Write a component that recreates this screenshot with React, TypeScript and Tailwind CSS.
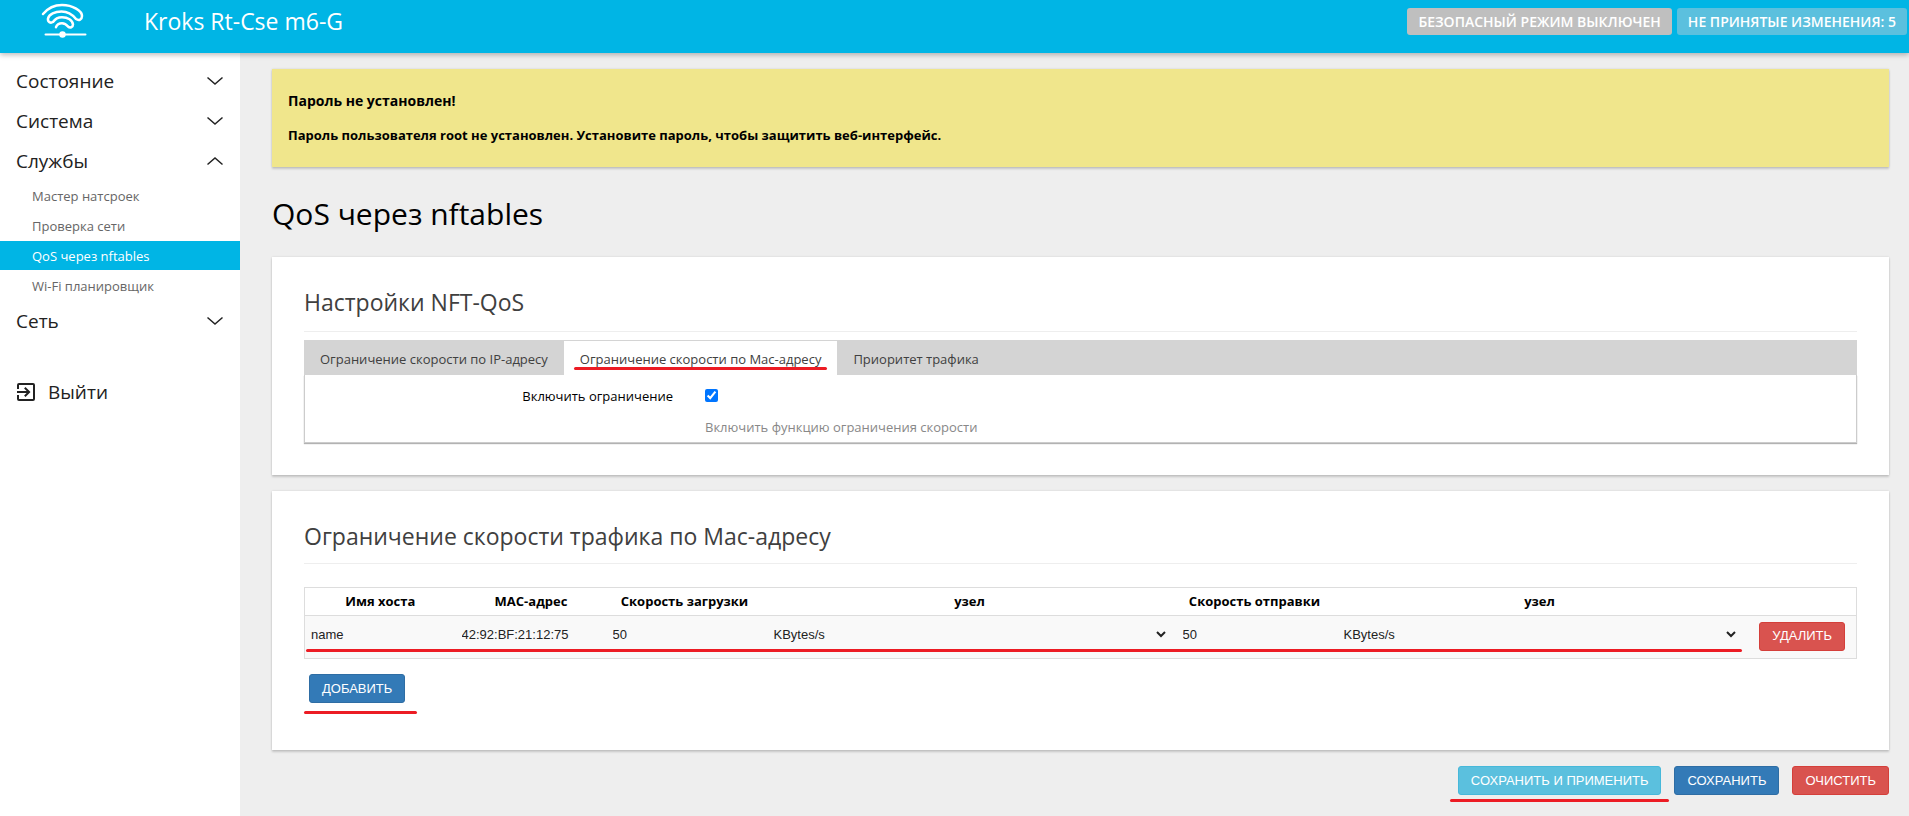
import React, { useState } from 'react';

interface Section {
  title: string;
  items?: string[];
}

const sections: Section[] = [
  { title: 'Состояние' },
  { title: 'Система' },
  { title: 'Службы', items: ['Мастер натсроек', 'Проверка сети', 'QoS через nftables', 'Wi-Fi планировщик'] },
  { title: 'Сеть' }
];

const tabs = ['Ограничение скорости по IP-адресу', 'Ограничение скорости по Mac-адресу', 'Приоритет трафика'];

const units = ['KBytes/s', 'MBytes/s', 'Bytes/s'];

const cardClass = 'bg-white px-8 shadow-[0_2px_2px_0_rgba(0,0,0,0.16),0_0_2px_0_rgba(0,0,0,0.12)]';
const buttonClass = "h-[29px] rounded-[3px] border px-3 font-['Liberation_Sans',sans-serif] text-[13px] leading-[26px] text-white cursor-pointer";
const fieldClass = "w-full bg-transparent font-['Liberation_Sans',sans-serif] text-[13px] leading-5 text-[#222]";

const Logo: React.FC = () => (
  <svg className="h-9 w-12" viewBox="0 0 48 36" fill="none" stroke="#fff" strokeWidth="2.500" strokeLinecap="round" strokeLinejoin="round" aria-hidden="true">
    <path d="M3 12C8 6 15 3 22 3c11 0 20 6 20 11 0 3.500-3 5-6 3-4-5-9-7.500-14.500-7.500C15 9.500 9 12 8 16.500 7.500 20 10.500 21.500 13 20c2-3 5.500-4.800 9-4.800 6 0 10.500 3 11 7.300 0 2.800-3 3.800-5 2-1.500-2-3.800-3.300-6-3.300-3 0-5.200 1.500-6 4" />
    <path d="M5.500 32.500h40" strokeWidth="2" />
    <circle cx="22.500" cy="32.500" r="2" fill="#fff" />
  </svg>
);

const Chevron: React.FC<{ open: boolean }> = ({ open }) => (
  <svg className="h-4 w-4" viewBox="0 0 16 16" fill="none" stroke="#222" strokeWidth="1.500" aria-hidden="true">
    {open ? <path d="M.5 11.500 8 5l7.500 6.500" /> : <path d="M.5 4.500 8 11l7.500-6.500" />}
  </svg>
);

// Red marker line under the things the reader has to touch
const Marker: React.FC<{ className: string }> = ({ className }) => (
  <span className={`pointer-events-none absolute h-[3px] rounded-full bg-[#ec1c24] ${className}`} />
);

const Sidebar: React.FC = () => (
  <nav className="w-60 shrink-0 bg-white pt-2">
    <ul>
      {sections.map((section) => (
        <li key={section.title}>
          <button className="flex h-10 w-full cursor-pointer items-center justify-between pl-4 pr-[17px] text-[19px] text-[#222]">
            {section.title}
            <Chevron open={!!section.items} />
          </button>
          {section.items && (
            <ul>
              {section.items.map((item) => (
                <li key={item} className="h-[30px]">
                  <a
                    href="#"
                    className={`block h-[29px] px-8 text-[13px] leading-[30px] ${item === 'QoS через nftables' ? 'bg-[#00b5e5] text-white' : 'text-[#666]'}`}
                  >
                    {item}
                  </a>
                </li>
              ))}
            </ul>
          )}
        </li>
      ))}
    </ul>
    <a href="#" className="mt-[31px] flex h-10 items-center gap-[13px] pl-[17px] text-[19px] text-[#222]">
      <svg className="h-[18px] w-[18px]" viewBox="3 3 18 18" fill="#222" aria-hidden="true">
        <path d="M10.090 15.590 11.500 17l5-5-5-5-1.410 1.410L12.670 11H3v2h9.670zM19 3H5a2 2 0 0 0-2 2v4h2V5h14v14H5v-4H3v4a2 2 0 0 0 2 2h14a2 2 0 0 0 2-2V5a2 2 0 0 0-2-2z" />
      </svg>
      Выйти
    </a>
  </nav>
);

const App: React.FC = () => {
  const [activeTab, setActiveTab] = useState(1);

  return (
    <div className="flex min-h-screen flex-col bg-[#eee] font-['Open_Sans','Noto_Sans',sans-serif] text-black">
      <header className="relative z-10 flex h-[53px] items-start bg-[#00b5e5] pr-0.5 shadow-[0_2px_5px_rgba(0,0,0,0.26)]">
        <div className="w-36 pl-10 pt-0.5">
          <Logo />
        </div>
        <h1 className="text-[23px] leading-[42px] text-white">Kroks Rt-Cse m6-G</h1>
        <div className="ml-auto flex gap-[5px] pt-2 text-[14px] font-semibold leading-[27px] text-white">
          <button className="cursor-pointer rounded-[3px] bg-[#bfbfbf] px-[11px]">БЕЗОПАСНЫЙ РЕЖИМ ВЫКЛЮЧЕН</button>
          <button className="cursor-pointer rounded-[3px] bg-[#5bc0de] px-[11px]">НЕ ПРИНЯТЫЕ ИЗМЕНЕНИЯ: 5</button>
        </div>
      </header>

      <div className="flex flex-1">
        <Sidebar />
        <main className="min-w-0 flex-1 pl-8 pr-5 pt-4">
          <div className="bg-[#f0e68c] px-4 pb-[22px] pt-5 font-bold shadow-[0_2px_2px_0_rgba(0,0,0,0.16),0_0_2px_0_rgba(0,0,0,0.12)]">
            <h4 className="text-[14px] leading-6">Пароль не установлен!</h4>
            <p className="mt-3 text-[13px] leading-5">
              Пароль пользователя root не установлен. Установите пароль, чтобы защитить веб-интерфейс.
            </p>
          </div>

          <h2 className="pb-5 pt-6 text-[30px] leading-[46px]">QoS через nftables</h2>

          <section className={`${cardClass} pb-8 pt-7`}>
            <h3 className="border-b border-[#eee] pb-3 text-[23px] leading-[34px] text-[#404040]">Настройки NFT-QoS</h3>
            <ul className="mt-2 flex border-t border-[#d4d4d4] bg-[#d4d4d4] text-[13px] text-[#404040]">
              {tabs.map((tab, index) => (
                <li key={tab} className={`relative ${index === activeTab ? 'bg-white' : ''}`}>
                  <button className="h-[34px] cursor-pointer px-4 pt-1" onClick={() => setActiveTab(index)}>
                    {tab}
                  </button>
                  {index === activeTab && <Marker className="inset-x-2.5 bottom-[5px]" />}
                </li>
              ))}
            </ul>
            <div className="flex border border-t-0 border-[#ccc] pb-[3px] pt-[9px] text-[13px] leading-6 shadow-[0_1px_1px_rgba(0,0,0,0.3)]">
              <label htmlFor="limit_enable" className="w-[368px] text-right">Включить ограничение</label>
              <div className="pl-8">
                <input id="limit_enable" type="checkbox" defaultChecked className="mt-[5px] block h-[13px] w-[13px]" />
                <p className="mt-[13px] text-[#888]">Включить функцию ограничения скорости</p>
              </div>
            </div>
          </section>

          <section className={`${cardClass} mt-4 pb-9 pt-7`}>
            <h3 className="border-b border-[#eee] pb-2.5 text-[23px] leading-[34px] text-[#404040]">
              Ограничение скорости трафика по Mac-адресу
            </h3>
            <div className="relative mt-[23px]">
              <table className="w-full table-fixed border border-[#ddd] text-[13px]">
                <colgroup>
                  <col className="w-[151px]" />
                  <col className="w-[151px]" />
                  <col className="w-[162px]" />
                  <col />
                  <col className="w-[162px]" />
                  <col />
                  <col className="w-[110px]" />
                </colgroup>
                <thead>
                  <tr className="h-7">
                    <th>Имя хоста</th>
                    <th>MAC-адрес</th>
                    <th className="pr-1.5">Скорость загрузки</th>
                    <th className="pr-1.5">узел</th>
                    <th className="pr-1.5">Скорость отправки</th>
                    <th className="pr-1.5">узел</th>
                    <th />
                  </tr>
                </thead>
                <tbody>
                  <tr className="h-[43px] border-t border-[#ddd] bg-[#f9f9f9]">
                    <td className="px-1.5 pb-1"><input aria-label="Имя хоста" defaultValue="name" className={fieldClass} /></td>
                    <td className="px-1.5 pb-1"><input aria-label="MAC-адрес" defaultValue="42:92:BF:21:12:75" className={fieldClass} /></td>
                    <td className="px-1.5 pb-1"><input aria-label="Скорость загрузки" defaultValue="50" className={fieldClass} /></td>
                    <td className="pb-1 pl-px pr-2">
                      <select aria-label="Единицы загрузки" className={fieldClass}>
                        {units.map((unit) => <option key={unit}>{unit}</option>)}
                      </select>
                    </td>
                    <td className="px-1.5 pb-1"><input aria-label="Скорость отправки" defaultValue="50" className={fieldClass} /></td>
                    <td className="pb-1 pl-px pr-2">
                      <select aria-label="Единицы отправки" className={fieldClass}>
                        {units.map((unit) => <option key={unit}>{unit}</option>)}
                      </select>
                    </td>
                    <td className="pb-0.5 pr-[11px] text-right">
                      <button className={`${buttonClass} border-[#d43f3a] bg-[#d9534f]`}>УДАЛИТЬ</button>
                    </td>
                  </tr>
                </tbody>
              </table>
              <Marker className="bottom-[7px] left-0.5 right-[115px]" />
            </div>
            <div className="relative mt-[15px] inline-block pb-[11px] pl-[5px]">
              <button className={`${buttonClass} border-[#2e6da4] bg-[#337ab7]`}>ДОБАВИТЬ</button>
              <Marker className="-right-3 bottom-0 left-0" />
            </div>
          </section>

          <div className="flex justify-end gap-[13px] pb-5 pt-4">
            <div className="relative">
              <button className={`${buttonClass} border-[#46b8da] bg-[#5bc0de]`}>СОХРАНИТЬ И ПРИМЕНИТЬ</button>
              <Marker className="-bottom-[7px] -left-2 -right-2" />
            </div>
            <button className={`${buttonClass} border-[#2e6da4] bg-[#337ab7]`}>СОХРАНИТЬ</button>
            <button className={`${buttonClass} border-[#d43f3a] bg-[#d9534f]`}>ОЧИСТИТЬ</button>
          </div>
        </main>
      </div>
    </div>
  );
};

export default App;
